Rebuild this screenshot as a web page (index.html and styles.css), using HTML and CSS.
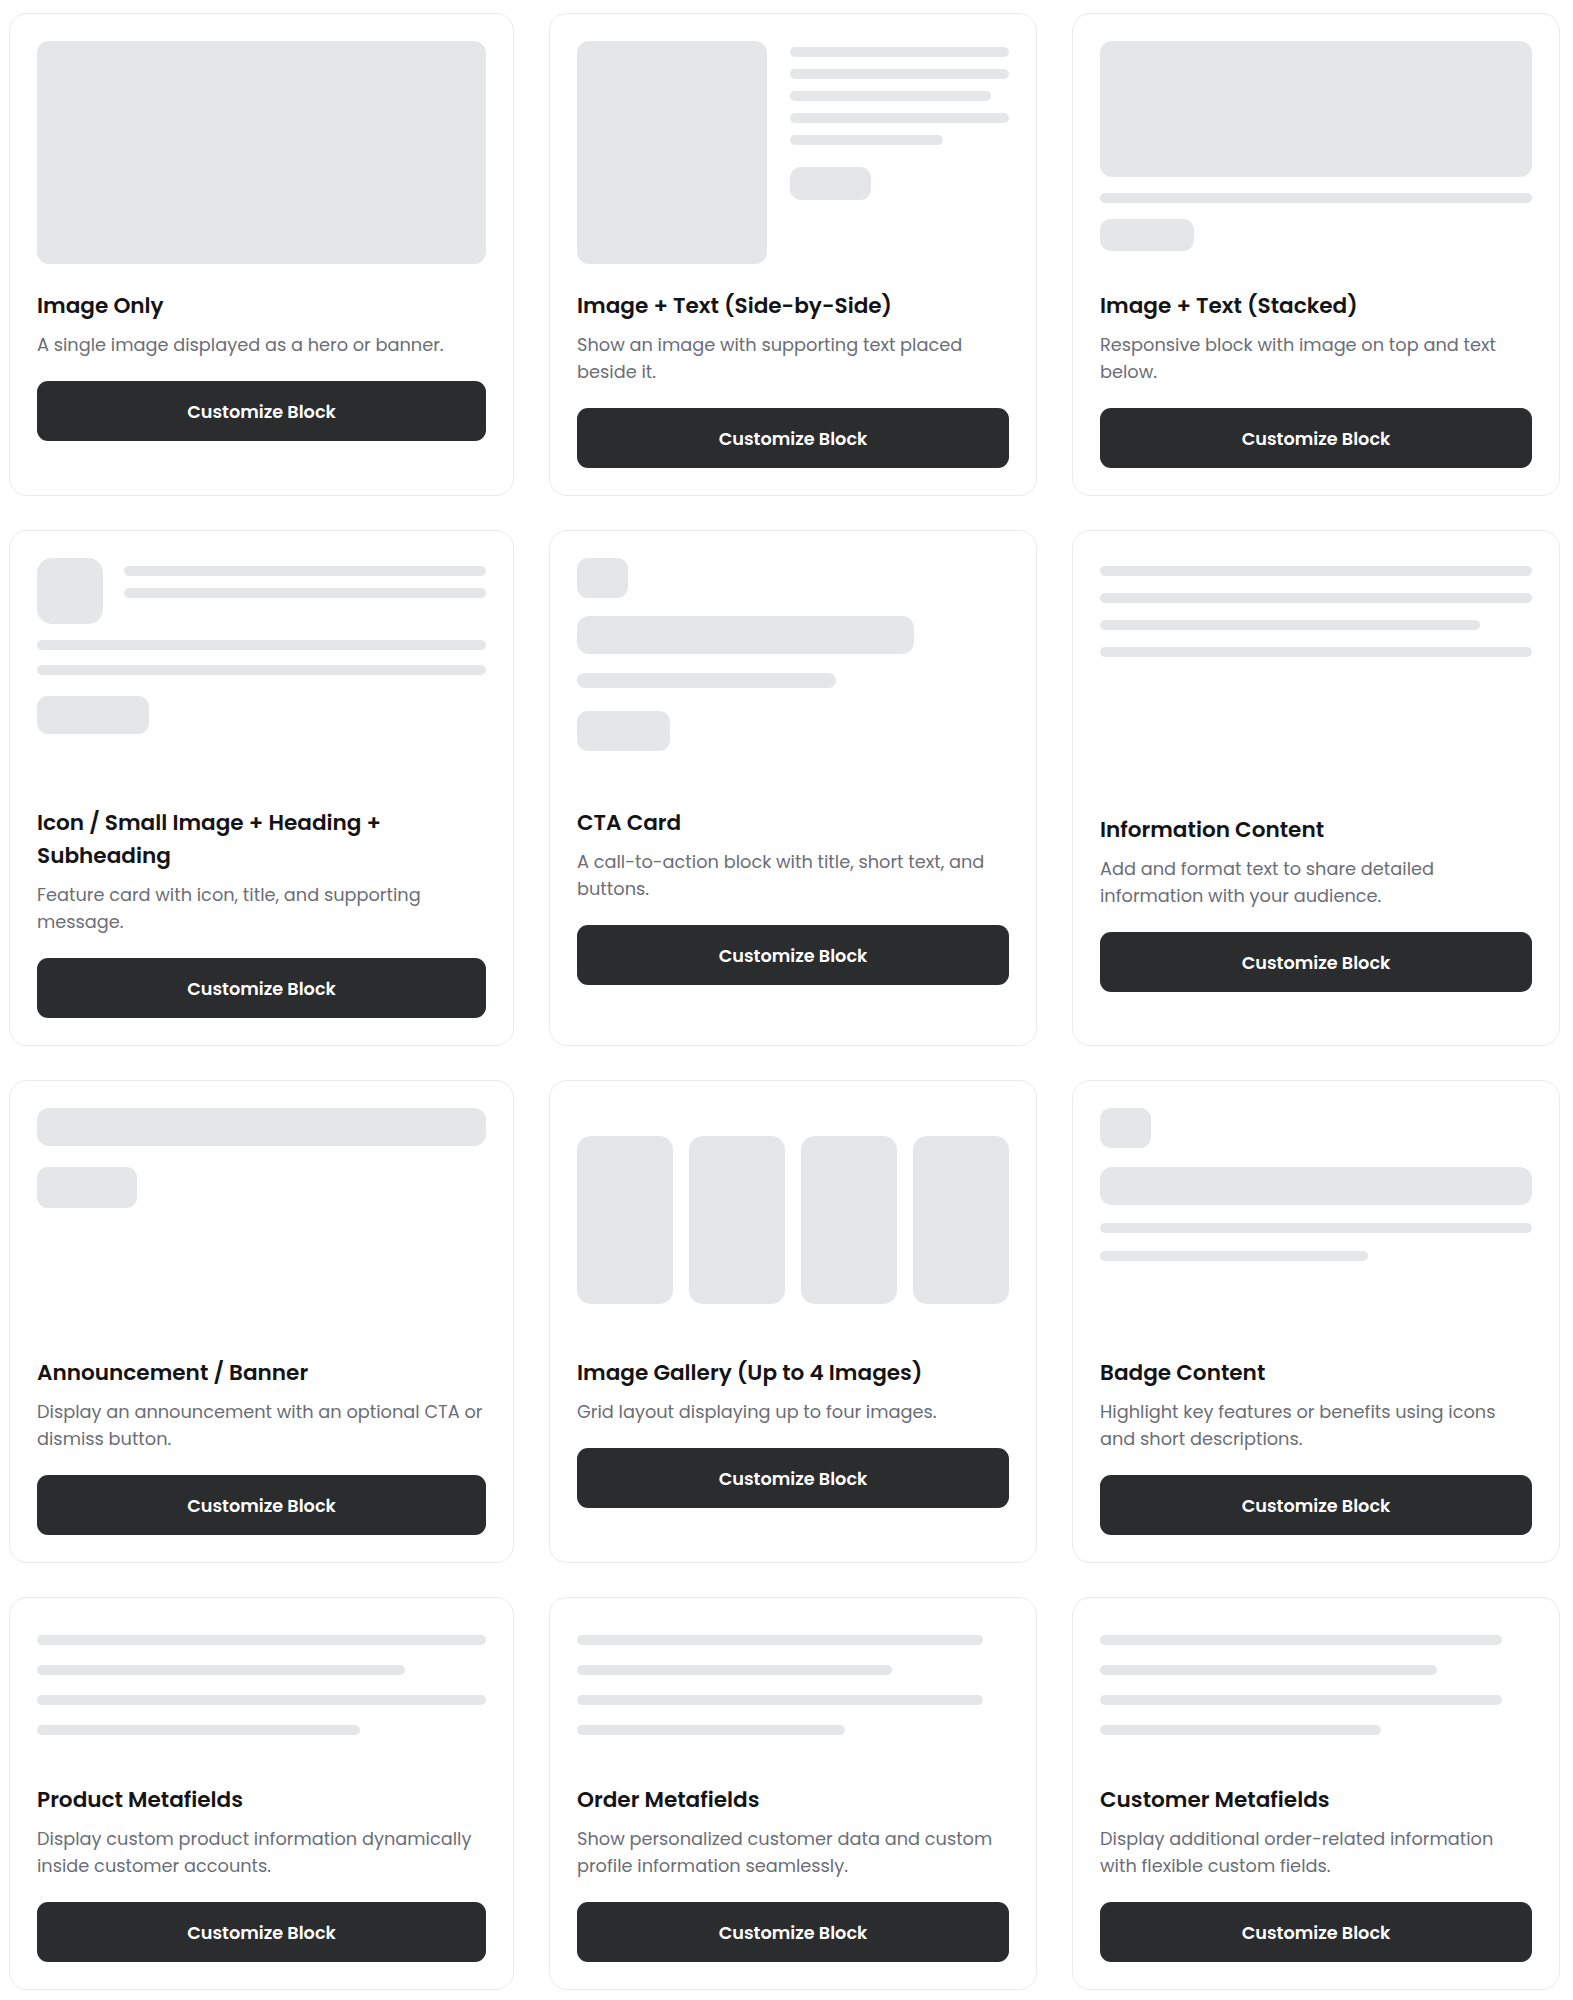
FILE: index.html
```html
<!DOCTYPE html>
<html lang="en">
<head>
<meta charset="utf-8">
<title>Blocks</title>
<link rel="stylesheet" href="styles.css">
</head>
<body>
<main class="grid">
  <!-- Row 1 -->
  <article class="card">
    <div class="preview">
      <div class="ph hero"></div>
    </div>
    <h3 class="title">Image Only</h3>
    <p class="desc">A single image displayed as a hero or banner.</p>
    <button class="btn">Customize Block</button>
  </article>

  <article class="card">
    <div class="preview side">
      <div class="ph side-img"></div>
      <div class="side-text">
        <div class="ln"></div>
        <div class="ln"></div>
        <div class="ln w92"></div>
        <div class="ln"></div>
        <div class="ln w70"></div>
        <div class="ph pill side-pill"></div>
      </div>
    </div>
    <h3 class="title">Image + Text (Side-by-Side)</h3>
    <p class="desc">Show an image with supporting text placed beside it.</p>
    <button class="btn">Customize Block</button>
  </article>

  <article class="card">
    <div class="preview stacked">
      <div class="ph stack-img"></div>
      <div class="ln"></div>
      <div class="ph pill stack-pill"></div>
    </div>
    <h3 class="title">Image + Text (Stacked)</h3>
    <p class="desc">Responsive block with image on top and text below.</p>
    <button class="btn">Customize Block</button>
  </article>

  <!-- Row 2 -->
  <article class="card">
    <div class="preview feature">
      <div class="feature-head">
        <div class="ph icon-lg"></div>
        <div class="feature-lines">
          <div class="ln"></div>
          <div class="ln"></div>
        </div>
      </div>
      <div class="ln"></div>
      <div class="ln"></div>
      <div class="ph pill feature-pill"></div>
    </div>
    <h3 class="title">Icon / Small Image + Heading + Subheading</h3>
    <p class="desc">Feature card with icon, title, and supporting message.</p>
    <button class="btn">Customize Block</button>
  </article>

  <article class="card">
    <div class="preview cta">
      <div class="ph icon-sm"></div>
      <div class="ph bar cta-bar"></div>
      <div class="ph cta-line"></div>
      <div class="ph pill cta-pill"></div>
    </div>
    <h3 class="title">CTA Card</h3>
    <p class="desc">A call-to-action block with title, short text, and buttons.</p>
    <button class="btn">Customize Block</button>
  </article>

  <article class="card">
    <div class="preview info">
      <div class="ln"></div>
      <div class="ln"></div>
      <div class="ln w88"></div>
      <div class="ln"></div>
    </div>
    <h3 class="title">Information Content</h3>
    <p class="desc">Add and format text to share detailed information with your audience.</p>
    <button class="btn">Customize Block</button>
  </article>

  <!-- Row 3 -->
  <article class="card">
    <div class="preview banner">
      <div class="ph bar"></div>
      <div class="ph pill banner-pill"></div>
    </div>
    <h3 class="title">Announcement / Banner</h3>
    <p class="desc">Display an announcement with an optional CTA or dismiss button.</p>
    <button class="btn">Customize Block</button>
  </article>

  <article class="card">
    <div class="preview gallery">
      <div class="ph tile"></div>
      <div class="ph tile"></div>
      <div class="ph tile"></div>
      <div class="ph tile"></div>
    </div>
    <h3 class="title">Image Gallery (Up to 4 Images)</h3>
    <p class="desc">Grid layout displaying up to four images.</p>
    <button class="btn">Customize Block</button>
  </article>

  <article class="card">
    <div class="preview badge">
      <div class="ph icon-sm"></div>
      <div class="ph bar"></div>
      <div class="ln"></div>
      <div class="ln w62"></div>
    </div>
    <h3 class="title">Badge Content</h3>
    <p class="desc">Highlight key features or benefits using icons and short descriptions.</p>
    <button class="btn">Customize Block</button>
  </article>

  <!-- Row 4 -->
  <article class="card">
    <div class="preview meta">
      <div class="ln"></div>
      <div class="ln w82"></div>
      <div class="ln"></div>
      <div class="ln w72"></div>
    </div>
    <h3 class="title">Product Metafields</h3>
    <p class="desc">Display custom product information dynamically inside customer accounts.</p>
    <button class="btn">Customize Block</button>
  </article>

  <article class="card">
    <div class="preview meta">
      <div class="ln w94"></div>
      <div class="ln w73"></div>
      <div class="ln w94"></div>
      <div class="ln w62"></div>
    </div>
    <h3 class="title">Order Metafields</h3>
    <p class="desc">Show personalized customer data and custom profile information seamlessly.</p>
    <button class="btn">Customize Block</button>
  </article>

  <article class="card">
    <div class="preview meta">
      <div class="ln w93"></div>
      <div class="ln w78"></div>
      <div class="ln w93"></div>
      <div class="ln w65"></div>
    </div>
    <h3 class="title">Customer Metafields</h3>
    <p class="desc">Display additional order-related information with flexible custom fields.</p>
    <button class="btn">Customize Block</button>
  </article>
</main>
</body>
</html>
```

FILE: styles.css
```css
* { box-sizing: border-box; }

html, body {
  margin: 0;
  padding: 0;
  background: #ffffff;
}

body {
  font-family: "Poppins", "Open Sans", "DejaVu Sans", sans-serif;
  color: #18181b;
}

.grid {
  display: grid;
  grid-template-columns: 505px 488px 488px;
  column-gap: 35px;
  row-gap: 34px;
  padding: 13px 0 10px 9px;
}

.card {
  display: flex;
  flex-direction: column;
  border: 1px solid #ebebeb;
  border-radius: 18px;
  padding: 27px;
  background: #fff;
}

.preview {
  height: 224px;
  margin-bottom: 24px;
}

.ph {
  background: #e5e6e8;
  border-radius: 12px;
}

.ln {
  height: 10px;
  border-radius: 5px;
  background: #e5e6e8;
  width: 100%;
}

.w94 { width: 94%; }
.w93 { width: 93%; }
.w92 { width: 92%; }
.w88 { width: 88%; }
.w82 { width: 82%; }
.w78 { width: 78%; }
.w73 { width: 73%; }
.w72 { width: 72%; }
.w70 { width: 70%; }
.w65 { width: 65%; }
.w62 { width: 62%; }

.pill { border-radius: 11px; }

/* Image only */
.hero { height: 223px; width: 100%; }

/* Side by side */
.side {
  display: flex;
  gap: 23px;
}
.side-img { width: 190px; height: 223px; flex: none; }
.side-text {
  flex: 1;
  display: flex;
  flex-direction: column;
  gap: 12px;
  padding-top: 6px;
}
.side-pill { width: 81px; height: 33px; margin-top: 10px; }

/* Stacked */
.stacked {
  display: flex;
  flex-direction: column;
  gap: 16px;
}
.stack-img { height: 136px; width: 100%; }
.stack-pill { width: 94px; height: 32px; }

/* Feature */
.feature {
  display: flex;
  flex-direction: column;
}
.feature-head {
  display: flex;
  gap: 21px;
  margin-bottom: 16px;
}
.icon-lg { width: 66px; height: 66px; border-radius: 15px; flex: none; }
.feature-lines {
  flex: 1;
  display: flex;
  flex-direction: column;
  gap: 12px;
  padding-top: 8px;
}
.feature > .ln + .ln { margin-top: 15px; }
.feature-pill { width: 112px; height: 38px; margin-top: 21px; }

/* CTA */
.cta {
  display: flex;
  flex-direction: column;
}
.icon-sm { width: 51px; height: 40px; border-radius: 11px; flex: none; }
.bar { height: 38px; width: 100%; border-radius: 12px; }
.cta-bar { width: 78%; margin-top: 18px; }
.cta-line { width: 60%; height: 15px; border-radius: 8px; margin-top: 19px; }
.cta-pill { width: 93px; height: 40px; margin-top: 23px; }

/* Info */
.info {
  height: 231px;
  display: flex;
  flex-direction: column;
  gap: 17px;
  padding-top: 8px;
}

/* Banner */
.banner {
  display: flex;
  flex-direction: column;
  gap: 21px;
}
.banner-pill { width: 100px; height: 41px; }

/* Gallery */
.gallery {
  display: grid;
  grid-template-columns: repeat(4, 1fr);
  gap: 16px;
  align-items: center;
}
.tile { height: 168px; border-radius: 14px; }

/* Badge */
.badge {
  display: flex;
  flex-direction: column;
  gap: 18px;
}
.badge .bar { margin-top: 1px; }

/* Meta */
.meta {
  height: auto;
  display: flex;
  flex-direction: column;
  gap: 20px;
  padding: 10px 0 24px;
}

.title {
  margin: 0 0 9px;
  font-size: 21.6px;
  line-height: 33px;
  font-weight: 600;
  color: #141416;
}

.desc {
  margin: 0 0 23px;
  font-size: 17.75px;
  line-height: 27px;
  color: #6b6e75;
}

.btn {
  display: block;
  width: 100%;
  height: 60px;
  border: 0;
  border-radius: 11px;
  background: #2b2c2e;
  color: #ffffff;
  font-family: inherit;
  font-size: 17.7px;
  font-weight: 600;
  cursor: pointer;
}
```
